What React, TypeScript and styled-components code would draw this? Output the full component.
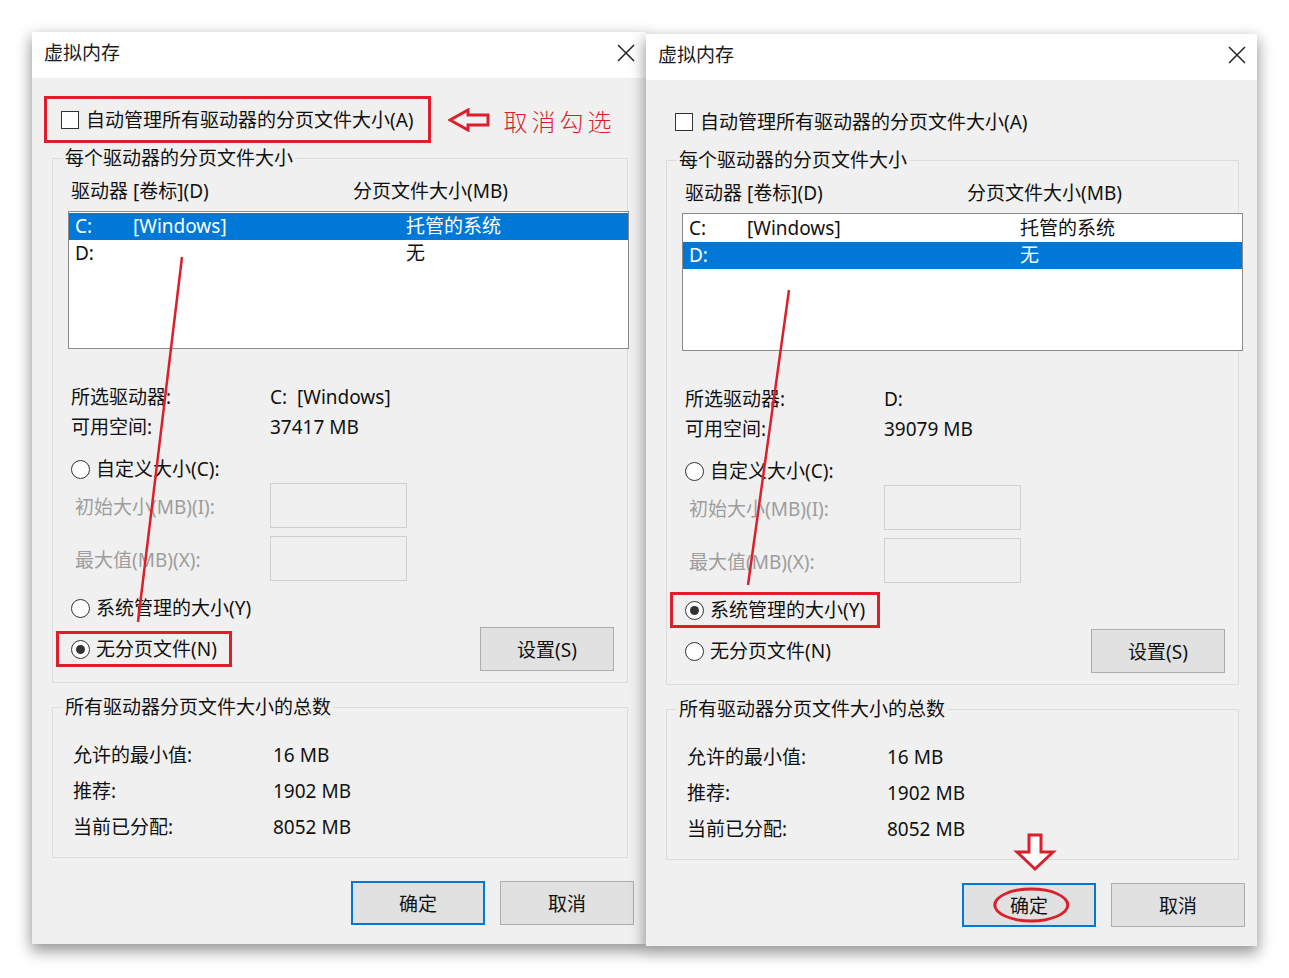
import React from "react";
import styled, { createGlobalStyle, css } from "styled-components";

const GlobalStyle = createGlobalStyle`
  html, body {
    margin: 0;
    padding: 0;
    background: #ffffff;
  }
  body {
    font-family: "Noto Sans", "Noto Sans CJK SC", sans-serif;
    color: #111;
  }
`;

const RED = "#dc1f2a";
const FONT = `"Noto Sans", "Noto Sans CJK SC", sans-serif`;

type RadioKey = "custom" | "system" | "none";

interface DialogData {
  width: number;
  offsetTop: number;
  selectedDrive: number;
  driveValue: string;
  freeSpace: string;
  radio: RadioKey;
  boxedRadio: RadioKey;
  boxCheckbox: boolean;
  showHint: boolean;
  line: [number, number, number, number];
  okArrow: boolean;
}

const drives = [
  { letter: "C:", label: "[Windows]", size: "托管的系统" },
  { letter: "D:", label: "", size: "无" },
];

const Page = styled.main`
  display: flex;
  align-items: flex-start;
  min-height: 978px;
  padding: 32px 0 0 32px;
  box-sizing: border-box;
`;

const Dialog = styled.section<{ $width: number; $offsetTop: number; $z: number }>`
  position: relative;
  z-index: ${({ $z }) => $z};
  width: ${({ $width }) => $width}px;
  margin-top: ${({ $offsetTop }) => $offsetTop}px;
  background: #f0f0f0;
  box-shadow: 0 6px 14px 1px rgba(0, 0, 0, 0.42);
  font-family: ${FONT};
  font-size: 19px;
  flex-shrink: 0;
`;

const TitleBar = styled.header`
  display: flex;
  align-items: flex-start;
  justify-content: space-between;
  height: 46px;
  padding: 10px 10px 0 12px;
  box-sizing: border-box;
  background: #ffffff;
`;

const Title = styled.h1`
  margin: 0;
  font-size: 19px;
  font-weight: 400;
  line-height: 22px;
  color: #1a1a1a;
`;

const CloseIcon = styled.svg`
  width: 20px;
  height: 20px;
  margin-top: 1px;
`;

const Body = styled.div`
  padding: 0 12px 19px 20px;
`;

const CheckRow = styled.div`
  display: flex;
  align-items: center;
  height: 24px;
  margin: 30px 0 0 9px;
`;

const Highlight = css`
  &::after {
    content: "";
    position: absolute;
    border: 3px solid ${RED};
    pointer-events: none;
  }
`;

const CheckLabel = styled.label<{ $boxed: boolean }>`
  position: relative;
  display: inline-flex;
  align-items: center;
  gap: 7px;
  line-height: 24px;
  white-space: nowrap;
  ${({ $boxed }) =>
    $boxed &&
    css`
      ${Highlight}
      &::after {
        inset: -12px -17px -11px -17px;
      }
    `}
`;

const CheckBox = styled.span`
  width: 18px;
  height: 18px;
  border: 1px solid #333;
  background: #fff;
  box-sizing: border-box;
  display: inline-block;
`;

const Hint = styled.div`
  display: flex;
  align-items: center;
  margin-left: 34px;
  gap: 14px;
  color: ${RED};
  font-family: "Noto Sans CJK SC", serif;
  font-weight: 300;
  font-size: 24px;
  letter-spacing: 4px;
  white-space: nowrap;
`;

const GroupBox = styled.div<{ $gap: number; $bottom: number }>`
  margin: ${({ $gap }) => $gap}px 6px 0 0;
  border: 1px solid #dcdcdc;
  padding: 0 13px ${({ $bottom }) => $bottom}px 15px;
`;

const Legend = styled.div`
  width: fit-content;
  margin: -13px 0 0 -5px;
  padding: 0 2px;
  background: #f0f0f0;
  line-height: 24px;
  white-space: nowrap;
`;

const ColumnHeader = styled.div`
  display: grid;
  grid-template-columns: 282px 1fr;
  margin-top: 9px;
  padding-left: 3px;
  line-height: 24px;
  white-space: nowrap;
`;

const DriveList = styled.ul`
  width: 561px;
  height: 138px;
  margin: 8px -16px 0 0;
  padding: 1px 0;
  box-sizing: border-box;
  list-style: none;
  border: 1px solid #8a8a8a;
  background: #fff;
`;

const DriveRow = styled.li<{ $selected: boolean }>`
  display: grid;
  grid-template-columns: 58px 273px 1fr;
  height: 27px;
  padding-left: 6px;
  align-items: center;
  line-height: 27px;
  white-space: nowrap;
  background: ${({ $selected }) => ($selected ? "#0078d7" : "transparent")};
  color: ${({ $selected }) => ($selected ? "#ffffff" : "#111")};
`;

const InfoGrid = styled.div`
  display: grid;
  grid-template-columns: 199px 1fr;
  margin-top: 33px;
  padding-left: 3px;
  line-height: 30px;
  white-space: pre;
`;

const RadioRow = styled.div<{ $gap: number }>`
  display: flex;
  align-items: center;
  margin-top: ${({ $gap }) => $gap}px;
  padding-left: 3px;
`;

const RadioLabel = styled.label<{ $boxed: boolean }>`
  position: relative;
  display: inline-flex;
  align-items: center;
  gap: 6px;
  line-height: 24px;
  white-space: nowrap;
  ${({ $boxed }) =>
    $boxed &&
    css`
      ${Highlight}
      &::after {
        inset: -6px -15px -6px -15px;
      }
    `}
`;

const Radio = styled.span<{ $checked: boolean }>`
  position: relative;
  width: 19px;
  height: 19px;
  border-radius: 50%;
  border: 1px solid #333;
  background: #fff;
  box-sizing: border-box;
  display: inline-flex;
  align-items: center;
  justify-content: center;

  &::before {
    content: "";
    width: 9px;
    height: 9px;
    border-radius: 50%;
    background: ${({ $checked }) => ($checked ? "#333" : "transparent")};
  }
`;

const SizeRow = styled.div<{ $gap: number }>`
  display: grid;
  grid-template-columns: 195px 137px;
  align-items: center;
  margin-top: ${({ $gap }) => $gap}px;
  padding-left: 7px;
  color: #9d9d9d;
  white-space: nowrap;
`;

const SizeInput = styled.div`
  height: 45px;
  border: 1px solid #d0d0d0;
  box-sizing: border-box;
  background: #f0f0f0;
`;

const BottomRow = styled.div`
  display: flex;
  align-items: center;
  justify-content: space-between;
  margin-top: 7px;
`;

const Button = styled.button<{ $primary?: boolean; $circled?: boolean }>`
  position: relative;
  width: 134px;
  height: 44px;
  padding: 0;
  font-family: ${FONT};
  font-size: 19px;
  color: #111;
  background: #e1e1e1;
  border: ${({ $primary }) => ($primary ? "2px solid #0078d7" : "1px solid #adadad")};
  box-sizing: border-box;
  cursor: default;

  ${({ $circled }) =>
    $circled &&
    css`
      &::after {
        content: "";
        position: absolute;
        left: 50%;
        top: 50%;
        width: 76px;
        height: 35px;
        transform: translate(-47%, -50%);
        border: 3px solid ${RED};
        border-radius: 50%;
        box-sizing: border-box;
      }
    `}
`;

const TotalsGrid = styled.div`
  display: grid;
  grid-template-columns: 200px 1fr;
  margin-top: 18px;
  padding-left: 5px;
  line-height: 36px;
  white-space: nowrap;
`;

const Footer = styled.div`
  display: flex;
  justify-content: flex-end;
  gap: 15px;
  margin-top: 23px;
`;

const Overlay = styled.svg`
  position: absolute;
  left: 0;
  top: 0;
  width: 100%;
  height: 100%;
  pointer-events: none;
  overflow: visible;
`;

function LeftArrow() {
  return (
    <svg width="42" height="24" viewBox="0 0 42 24">
      <polygon
        points="2,12 20,2 20,7 40,7 40,17 20,17 20,22"
        fill="none"
        stroke={RED}
        strokeWidth="3"
        strokeLinejoin="miter"
      />
    </svg>
  );
}

function VirtualMemoryDialog({ d, z }: { d: DialogData; z: number }) {
  const radios: { key: RadioKey; text: string }[] = [
    { key: "custom", text: "自定义大小(C):" },
    { key: "system", text: "系统管理的大小(Y)" },
    { key: "none", text: "无分页文件(N)" },
  ];
  const radio = (key: RadioKey) => {
    const r = radios.find((x) => x.key === key)!;
    return (
      <RadioLabel $boxed={d.boxedRadio === key}>
        <Radio $checked={d.radio === key} />
        {r.text}
      </RadioLabel>
    );
  };
  const [x1, y1, x2, y2] = d.line;

  return (
    <Dialog $width={d.width} $offsetTop={d.offsetTop} $z={z}>
      <TitleBar>
        <Title>虚拟内存</Title>
        <CloseIcon viewBox="0 0 20 20">
          <path d="M2 2 L18 18 M18 2 L2 18" stroke="#222" strokeWidth="1.5" fill="none" />
        </CloseIcon>
      </TitleBar>

      <Body>
        <CheckRow>
          <CheckLabel $boxed={d.boxCheckbox}>
            <CheckBox />
            自动管理所有驱动器的分页文件大小(A)
          </CheckLabel>
          {d.showHint && (
            <Hint>
              <LeftArrow />
              <span>取消勾选</span>
            </Hint>
          )}
        </CheckRow>

        <GroupBox $gap={26} $bottom={11}>
          <Legend>每个驱动器的分页文件大小</Legend>
          <ColumnHeader>
            <span>驱动器 [卷标](D)</span>
            <span>分页文件大小(MB)</span>
          </ColumnHeader>
          <DriveList>
            {drives.map((dr, i) => (
              <DriveRow key={dr.letter} $selected={i === d.selectedDrive}>
                <span>{dr.letter}</span>
                <span>{dr.label}</span>
                <span>{dr.size}</span>
              </DriveRow>
            ))}
          </DriveList>

          <InfoGrid>
            <span>所选驱动器:</span>
            <span>{d.driveValue}</span>
            <span>可用空间:</span>
            <span>{d.freeSpace}</span>
          </InfoGrid>

          <RadioRow $gap={15}>{radio("custom")}</RadioRow>
          <SizeRow $gap={2}>
            <span>初始大小(MB)(I):</span>
            <SizeInput />
          </SizeRow>
          <SizeRow $gap={8}>
            <span>最大值(MB)(X):</span>
            <SizeInput />
          </SizeRow>
          <RadioRow $gap={15}>{radio("system")}</RadioRow>
          <BottomRow>
            <RadioRow $gap={0}>{radio("none")}</RadioRow>
            <Button>设置(S)</Button>
          </BottomRow>
        </GroupBox>

        <GroupBox $gap={24} $bottom={12}>
          <Legend>所有驱动器分页文件大小的总数</Legend>
          <TotalsGrid>
            <span>允许的最小值:</span>
            <span>16 MB</span>
            <span>推荐:</span>
            <span>1902 MB</span>
            <span>当前已分配:</span>
            <span>8052 MB</span>
          </TotalsGrid>
        </GroupBox>

        <Footer>
          <Button $primary $circled={d.okArrow}>
            确定
          </Button>
          <Button>取消</Button>
        </Footer>
      </Body>

      <Overlay>
        <line x1={x1} y1={y1} x2={x2} y2={y2} stroke={RED} strokeWidth="2.5" />
        {d.okArrow && (
          <polygon
            points="383,801 395,801 395,818 407,818 389,835 371,818 383,818"
            fill="#fff"
            stroke={RED}
            strokeWidth="3"
          />
        )}
      </Overlay>
    </Dialog>
  );
}

const dialogs: DialogData[] = [
  {
    width: 614,
    offsetTop: 0,
    selectedDrive: 0,
    driveValue: "C:  [Windows]",
    freeSpace: "37417 MB",
    radio: "none",
    boxedRadio: "none",
    boxCheckbox: true,
    showHint: true,
    line: [150, 225, 106, 590],
    okArrow: false,
  },
  {
    width: 611,
    offsetTop: 2,
    selectedDrive: 1,
    driveValue: "D:",
    freeSpace: "39079 MB",
    radio: "system",
    boxedRadio: "system",
    boxCheckbox: false,
    showHint: false,
    line: [143, 256, 102, 551],
    okArrow: true,
  },
];

export default function App() {
  return (
    <>
      <GlobalStyle />
      <Page>
        {dialogs.map((d, i) => (
          <VirtualMemoryDialog key={i} d={d} z={i + 1} />
        ))}
      </Page>
    </>
  );
}
